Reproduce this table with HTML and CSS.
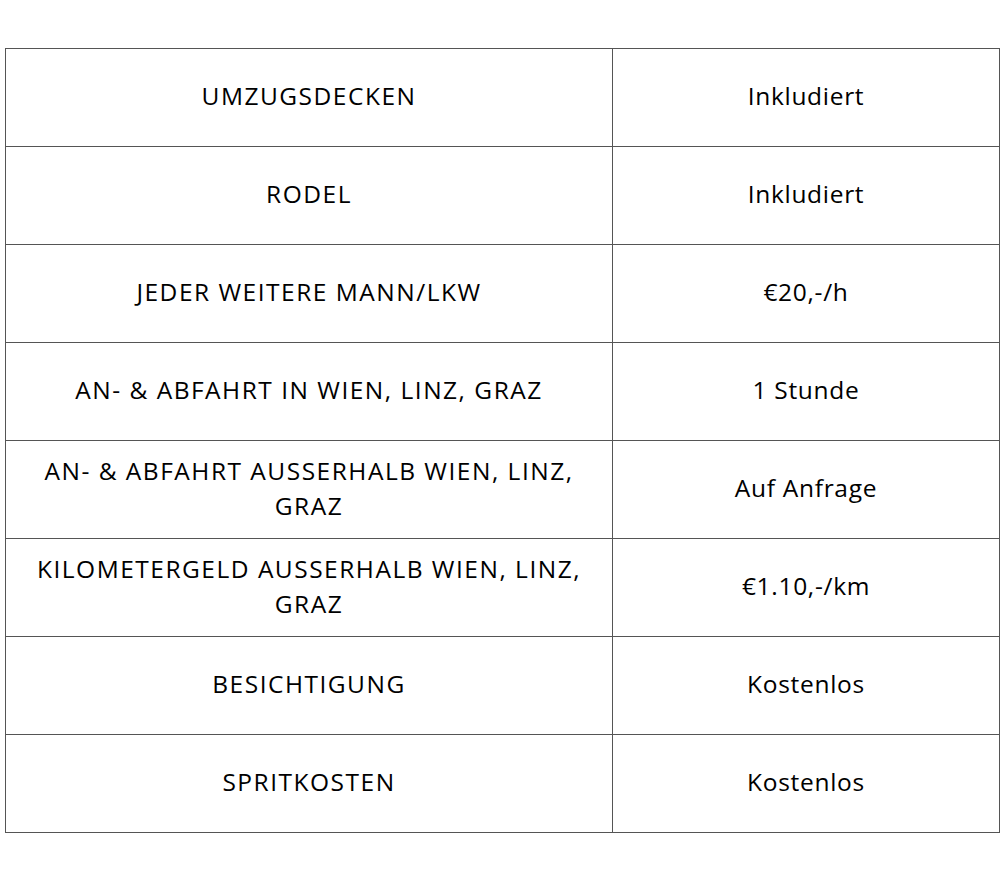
FILE: index.html
```html
<!DOCTYPE html>
<html lang="de">
<head>
<meta charset="utf-8">
<title>Preise</title>
<link rel="stylesheet" href="styles.css">
</head>
<body>
<table class="prices">
  <tr><td class="label">UMZUGSDECKEN</td><td class="value">Inkludiert</td></tr>
  <tr><td class="label">RODEL</td><td class="value">Inkludiert</td></tr>
  <tr><td class="label">JEDER WEITERE MANN/LKW</td><td class="value">€20,-/h</td></tr>
  <tr><td class="label">AN- &amp; ABFAHRT IN WIEN, LINZ, GRAZ</td><td class="value">1 Stunde</td></tr>
  <tr><td class="label">AN- &amp; ABFAHRT AUSSERHALB WIEN, LINZ, GRAZ</td><td class="value">Auf Anfrage</td></tr>
  <tr><td class="label">KILOMETERGELD AUSSERHALB WIEN, LINZ, GRAZ</td><td class="value">€1.10,-/km</td></tr>
  <tr><td class="label">BESICHTIGUNG</td><td class="value">Kostenlos</td></tr>
  <tr><td class="label">SPRITKOSTEN</td><td class="value">Kostenlos</td></tr>
</table>
</body>
</html>
```
FILE: styles.css
```css
html, body {
  margin: 0;
  padding: 0;
  background: #ffffff;
}
body {
  padding: 48px 0 0 5px;
  font-family: "Open Sans", "Liberation Sans", sans-serif;
  color: #000000;
}
.prices {
  width: 994px;
  border-collapse: collapse;
  table-layout: fixed;
}
.prices td {
  border: 1.5px solid #555555;
  height: 98px;
  box-sizing: border-box;
  text-align: center;
  vertical-align: middle;
  font-size: 24.5px;
  font-weight: 500;
  line-height: 35px;
  padding: 0 20px 4px;
}
.prices .label {
  width: 607px;
  letter-spacing: 1.5px;
}
.prices .value {
  width: 387px;
  letter-spacing: 0.7px;
}
```
